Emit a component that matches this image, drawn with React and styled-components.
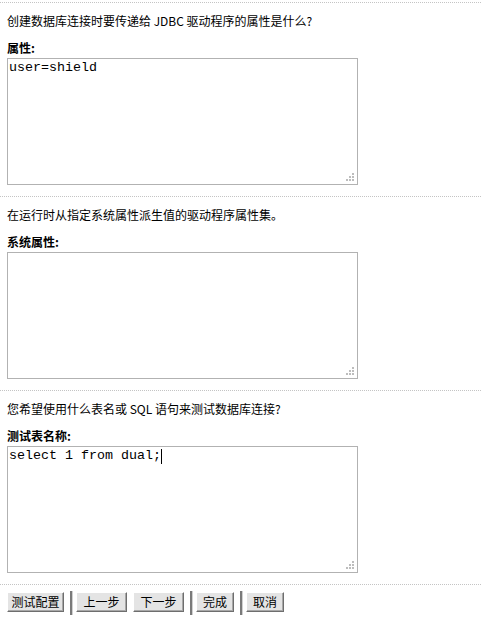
import React from "react";
import styled, { createGlobalStyle } from "styled-components";

const GlobalStyle = createGlobalStyle`
  body {
    margin: 0;
    background: #fff;
    font-family: "Noto Sans CJK SC", "Liberation Sans", sans-serif;
    font-size: 12px;
    color: #000;
  }
`;

const Page = styled.div`
  width: 481px;
  padding-top: 2px;
`;

const Section = styled.div`
  border-top: 1px dotted #c4c4c4;
  padding: 10px 7px 11px;
`;

const Question = styled.div`
  font-size: 12px;
  line-height: 16px;
  height: 16px;
  white-space: nowrap;
`;

const Label = styled.div`
  margin-top: 11px;
  font-weight: bold;
  font-size: 12px;
  line-height: 16px;
  height: 16px;
`;

const FieldWrap = styled.div`
  position: relative;
  margin-top: 2px;
  width: 351px;
  height: 127px;
`;

const Field = styled.textarea`
  box-sizing: border-box;
  width: 351px;
  height: 127px;
  margin: 0;
  padding: 1px 1px;
  border: 1px solid #b2b2b2;
  resize: none;
  outline: none;
  font-family: "Liberation Mono", monospace;
  font-size: 13.33px;
  line-height: 16px;
  color: #000;
  background: #fff;
`;

const Grip = styled.svg`
  position: absolute;
  right: 3px;
  bottom: 3px;
`;

const Caret = styled.span`
  position: absolute;
  left: ${(p) => p.$x}px;
  top: 3px;
  width: 1px;
  height: 15px;
  background: #000;
`;

const Toolbar = styled.div`
  border-top: 1px dotted #c4c4c4;
  display: flex;
  align-items: flex-start;
  padding: 6px 7px 0;
`;

const Button = styled.button`
  box-sizing: border-box;
  width: ${(p) => p.$w}px;
  height: 20px;
  margin-top: 1px;
  margin-right: ${(p) => p.$gap || 0}px;
  padding: 0;
  font-family: "Noto Sans CJK SC", sans-serif;
  font-size: 12px;
  line-height: 16px;
  text-align: center;
  color: #000;
  background: #e4e4e4;
  border: 1px solid;
  border-color: #fff #6e6e6e #6e6e6e #fff;
  box-shadow: inset -1px -1px 0 #a8a8a8;
`;

const Sep = styled.div`
  width: 2px;
  height: 24px;
  margin: 0 3px 0 6px;
  background: #7a7a7a;
  border-right: 1px solid #d0d0d0;
`;

const GripIcon = () => (
  <Grip width="9" height="9" viewBox="0 0 9 9">
    {[
      [6, 0],
      [3, 3],
      [6, 3],
      [0, 6],
      [3, 6],
      [6, 6],
    ].map(([x, y]) => (
      <rect key={`${x}-${y}`} x={x} y={y} width="2" height="2" fill="#bdbdbd" />
    ))}
  </Grip>
);

const sections = [
  {
    q: "创建数据库连接时要传递给 JDBC 驱动程序的属性是什么?",
    label: "属性:",
    value: "user=shield",
  },
  {
    q: "在运行时从指定系统属性派生值的驱动程序属性集。",
    label: "系统属性:",
    value: "",
  },
  {
    q: "您希望使用什么表名或 SQL 语句来测试数据库连接?",
    label: "测试表名称:",
    value: "select 1 from dual;",
    caret: true,
  },
];

export default function App() {
  return (
    <>
      <GlobalStyle />
      <Page>
        {sections.map((s) => (
          <Section key={s.label}>
            <Question>{s.q}</Question>
            <Label>{s.label}</Label>
            <FieldWrap>
              <Field defaultValue={s.value} spellCheck={false} />
              <GripIcon />
              {s.caret && <Caret $x={2 + s.value.length * 8} />}
            </FieldWrap>
          </Section>
        ))}
        <Toolbar>
          <Button $w={57}>测试配置</Button>
          <Sep />
          <Button $w={51} $gap={6}>上一步</Button>
          <Button $w={51}>下一步</Button>
          <Sep />
          <Button $w={38}>完成</Button>
          <Sep />
          <Button $w={38}>取消</Button>
        </Toolbar>
      </Page>
    </>
  );
}
